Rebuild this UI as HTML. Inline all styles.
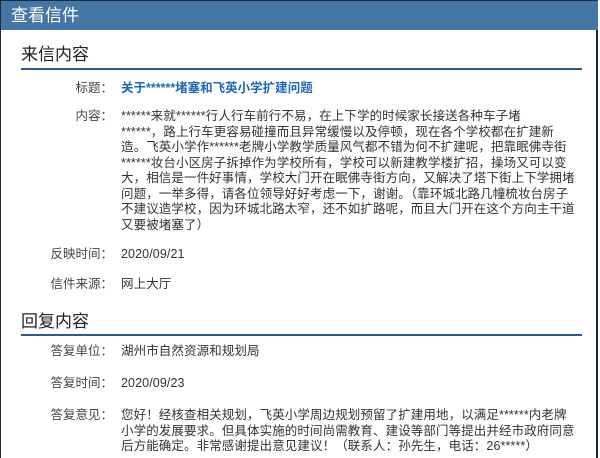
<!DOCTYPE html>
<html><head><meta charset="utf-8"><style>
body{margin:0;width:600px;height:458px;overflow:hidden;background:#fff;font-family:"Liberation Sans","Noto Sans CJK SC",sans-serif;color:#333;position:relative}
.frame{position:absolute;left:0;top:0;width:598px;height:458px;border-left:1px solid #1a2a40;border-right:2px solid #1a2a40;border-top:1px solid #1a2a40;box-sizing:border-box}
.hdr{position:absolute;left:1px;top:1px;width:597px;height:29px;background:#4676a6;color:#fff;font-size:17px;line-height:29px;padding-left:10px;box-sizing:border-box}
.sec{position:absolute;left:21px;font-size:17px;color:#222}
.line{position:absolute;left:21px;width:561px;height:2px;background:#2e5a8c}
.lab{position:absolute;width:113px;text-align:right;font-size:12.5px;line-height:15.5px;color:#444;left:0}
.val{position:absolute;left:121px;font-size:12.5px;line-height:15.5px;color:#333;white-space:nowrap;letter-spacing:0.1px}
.t{color:#1f68b5;font-weight:bold;letter-spacing:0}
</style></head><body>
<div class="frame"></div>
<div class="hdr">查看信件</div>
<div class="sec" style="top:40px">来信内容</div>
<div class="line" style="top:68px"></div>
<div class="lab" style="top:81px">标题：</div>
<div class="val t" style="top:81px">关于******堵塞和飞英小学扩建问题</div>
<div class="lab" style="top:109px">内容：</div>
<div class="val" style="top:109px">******来就******行人行车前行不易，在上下学的时候家长接送各种车子堵<br>******，路上行车更容易碰撞而且异常缓慢以及停顿，现在各个学校都在扩建新<br>造。飞英小学作******老牌小学教学质量风气都不错为何不扩建呢，把靠眠佛寺街<br>******妆台小区房子拆掉作为学校所有，学校可以新建教学楼扩招，操场又可以变<br>大，相信是一件好事情，学校大门开在眠佛寺街方向，又解决了塔下街上下学拥堵<br>问题，一举多得，请各位领导好好考虑一下，谢谢。（靠环城北路几幢梳妆台房子<br>不建议造学校，因为环城北路太窄，还不如扩路呢，而且大门开在这个方向主干道<br>又要被堵塞了）</div>
<div class="lab" style="top:247px">反映时间：</div>
<div class="val" style="top:247px">2020/09/21</div>
<div class="lab" style="top:277px">信件来源：</div>
<div class="val" style="top:277px">网上大厅</div>
<div class="sec" style="top:307px">回复内容</div>
<div class="line" style="top:334px"></div>
<div class="lab" style="top:344px">答复单位：</div>
<div class="val" style="top:344px">湖州市自然资源和规划局</div>
<div class="lab" style="top:376px">答复时间：</div>
<div class="val" style="top:376px">2020/09/23</div>
<div class="lab" style="top:408px">答复意见：</div>
<div class="val" style="top:408px">您好！经核查相关规划，飞英小学周边规划预留了扩建用地，以满足******内老牌<br>小学的发展要求。但具体实施的时间尚需教育、建设等部门等提出并经市政府同意<br>后方能确定。非常感谢提出意见建议！（联系人：孙先生，电话：26*****）</div>
</body></html>
